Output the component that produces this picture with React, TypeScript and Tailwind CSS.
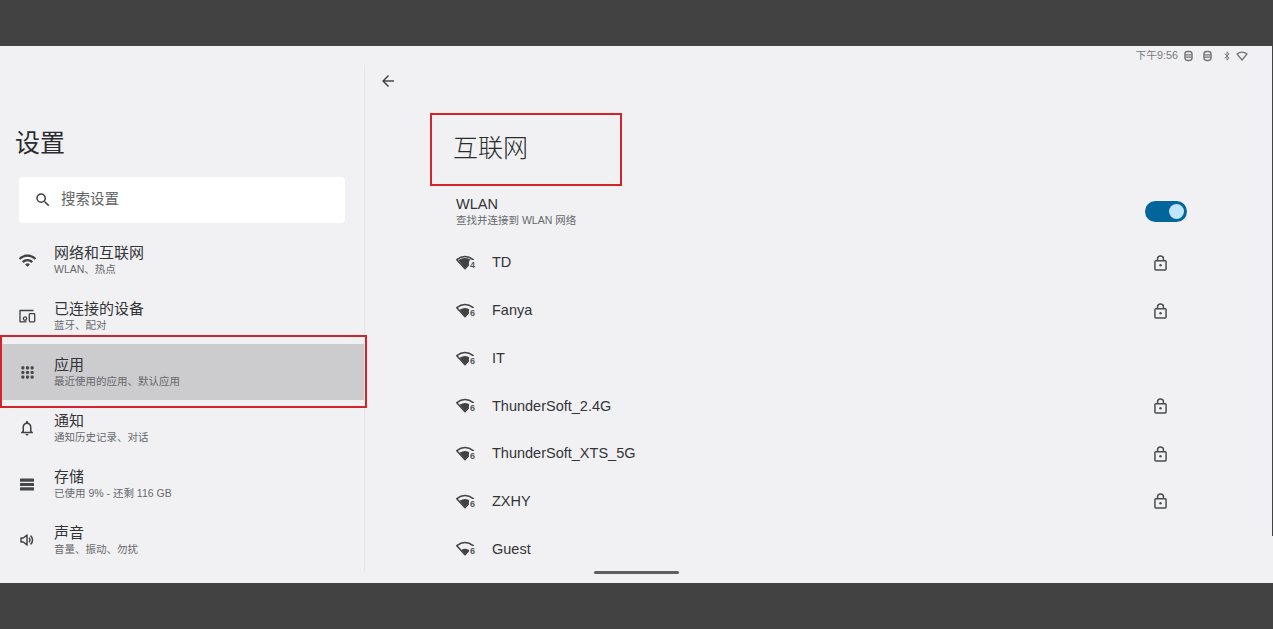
import { Bluetooth } from "lucide-react";
import { MdArrowBack, MdOutlineNotifications, MdSearch, MdWifi } from "react-icons/md";
import type { ReactNode } from "react";

const font = "font-['Liberation_Sans','Noto_Sans_CJK_SC',sans-serif]";

function GridIcon() {
  return (
    <svg viewBox="0 0 14 14" className="h-[13px] w-[13px] fill-[#45474a]">
      {[2, 7, 12].map((y) =>
        [2, 7, 12].map((x) => <rect key={`${x}-${y}`} x={x - 1.7} y={y - 1.7} width="3.4" height="3.4" rx="1.2" />),
      )}
    </svg>
  );
}

function StorageIcon() {
  return (
    <svg viewBox="0 0 14 13" className="h-[13px] w-[14px] fill-[#45474a]">
      <rect x="0" y="0.5" width="14" height="3.2" rx="0.5" />
      <rect x="0" y="4.9" width="14" height="3.2" rx="0.5" />
      <rect x="0" y="9.3" width="14" height="3.2" rx="0.5" />
    </svg>
  );
}

function SoundIcon() {
  return (
    <svg viewBox="0 0 14 14" fill="none" stroke="#3f4144" strokeWidth="1.5" className="h-[14px] w-[14px]">
      <path d="M1 5v4h2.4L7 12V2L3.4 5Z" strokeLinejoin="round" />
      <path d="M9 4.8a3 3 0 0 1 0 4.4" />
      <path d="M10.6 2.6a6 6 0 0 1 0 8.8" />
    </svg>
  );
}

function DevicesIcon() {
  return (
    <svg viewBox="0 0 18 14" fill="none" stroke="#3f4144" strokeWidth="1.3" className="h-[14px] w-[18px]">
      <path d="M2 12.5V1.5h13.5" />
      <path d="M1.5 12.8h7" />
      <circle cx="7" cy="9.6" r="1.7" />
      <rect x="11.3" y="4.6" width="5.4" height="8.2" rx="0.8" />
    </svg>
  );
}

// wifi fan with the little standard number next to it
function WifiBadge({ level, label }: { level: "full" | "mid" | "low"; label: string }) {
  const fill =
    level === "full"
      ? "M2.4 5.8 Q9 1 15.6 5.8 L9 13.8Z"
      : level === "mid"
        ? "M3.6 7.2 Q9 3.6 14.4 7.2 L9 13.8Z"
        : "M5.4 9.4 Q9 7.2 12.6 9.4 L9 13.8Z";
  return (
    <span className="relative -mt-[1px] block h-[16px] w-[20px]">
      <svg viewBox="0 0 18 15" className="absolute left-0 top-0 h-[16px] w-[18px]">
        <path d="M0.8 5.2 Q9 -1.2 17.2 5.2 L9 14.2Z" fill="none" stroke="#3f4144" strokeWidth="1.5" strokeLinejoin="round" />
        <path d={fill} fill="#3f4144" />
      </svg>
      <span className="absolute left-[13px] top-[6px] rounded-[2px] bg-[#f1f1f4] px-px text-[9px] leading-[10px] font-bold text-[#55575a]">
        {label}
      </span>
    </span>
  );
}

function LockIcon() {
  return (
    <svg viewBox="0 0 14 17" fill="none" stroke="#4a4c50" strokeWidth="1.6" className="h-[16px] w-[13px]">
      <rect x="1" y="6" width="12" height="10" rx="1" />
      <path d="M3.8 6V4.2a3.2 3.2 0 0 1 6.4 0V6" />
      <circle cx="7" cy="11" r="1.3" fill="#4a4c50" stroke="none" />
    </svg>
  );
}

function BatteryGlyph() {
  return (
    <svg viewBox="0 0 10 12" fill="none" stroke="#6f7174" strokeWidth="1.4" className="h-[12px] w-[9px]">
      <rect x="1" y="1" width="8" height="10" rx="3" />
      <path d="M1 4.7h8M1 7.3h8" />
    </svg>
  );
}

const menu: { icon: ReactNode; title: string; sub: string; active?: boolean }[] = [
  { icon: <MdWifi size={19} color="#3f4144" />, title: "网络和互联网", sub: "WLAN、热点" },
  { icon: <DevicesIcon />, title: "已连接的设备", sub: "蓝牙、配对" },
  { icon: <GridIcon />, title: "应用", sub: "最近使用的应用、默认应用", active: true },
  { icon: <MdOutlineNotifications size={18} color="#3f4144" />, title: "通知", sub: "通知历史记录、对话" },
  { icon: <StorageIcon />, title: "存储", sub: "已使用 9% - 还剩 116 GB" },
  { icon: <SoundIcon />, title: "声音", sub: "音量、振动、勿扰" },
];

const networks: { name: string; label: string; level: "full" | "mid" | "low"; locked: boolean }[] = [
  { name: "TD", label: "4", level: "full", locked: true },
  { name: "Fanya", label: "6", level: "mid", locked: true },
  { name: "IT", label: "6", level: "mid", locked: false },
  { name: "ThunderSoft_2.4G", label: "6", level: "mid", locked: true },
  { name: "ThunderSoft_XTS_5G", label: "6", level: "mid", locked: true },
  { name: "ZXHY", label: "6", level: "mid", locked: true },
  { name: "Guest", label: "6", level: "low", locked: false },
];

export default function App() {
  return (
    <div className={`${font} flex h-[629px] w-full flex-col overflow-hidden bg-[#424242]`}>
      <div className="h-[46px] shrink-0" />

      <div className="relative flex h-[537px] shrink-0 flex-col bg-[#f1f1f4]">
        {/* status bar */}
        <div className="flex h-[19px] items-center justify-end pr-[25px] text-[10.75px] text-[#77797c]">
          <span>下午9:56</span>
          <span className="ml-[6px]"><BatteryGlyph /></span>
          <span className="ml-[10px]"><BatteryGlyph /></span>
          <span className="ml-[10px]"><Bluetooth size={10} strokeWidth={2.2} color="#6f7174" /></span>
          <svg viewBox="0 0 12 10" fill="none" stroke="#6f7174" strokeWidth="1.2" className="ml-[4px] h-[10px] w-[12px]">
            <path d="M1 3 Q6 -0.6 11 3 L6 9Z" strokeLinejoin="round" />
          </svg>
        </div>

        <div className="flex h-[506px]">
          {/* left pane */}
          <div className="flex w-[365px] shrink-0 flex-col border-r border-[#e6e6e9]">
            <h1 className="mt-[63px] pl-[15px] text-[25px] leading-[30px] font-normal text-[#2b2c2e]">设置</h1>
            <div className="mt-[19px] ml-[19px] flex h-[46px] w-[326px] items-center rounded-[4px] bg-white pl-[15px]">
              <MdSearch size={18} color="#3f4144" />
              <span className="ml-[9px] text-[14.5px] text-[#606265]">搜索设置</span>
            </div>
            <div className="mt-[9px] flex flex-col">
              {menu.map((item) => (
                <div key={item.title} className={`flex h-[56px] items-center ${item.active ? "bg-[#cccbce]" : ""}`}>
                  <span className="flex w-[54px] shrink-0 justify-center">{item.icon}</span>
                  <span className="flex flex-col">
                    <span className="text-[15px] leading-[18px] text-[#333437]">{item.title}</span>
                    <span className="text-[10.5px] leading-[14px] text-[#66686b]">{item.sub}</span>
                  </span>
                </div>
              ))}
            </div>
          </div>

          {/* right pane */}
          <div className="flex min-w-0 flex-1 flex-col">
            <div className="flex h-[32px] shrink-0 items-center pl-[14px]">
              <MdArrowBack size={18} color="#45474a" />
            </div>
            <h2 className="mt-[33px] shrink-0 pl-[88px] text-[25px] leading-[36px] font-light text-[#2b2c2e]">互联网</h2>
            <div className="mt-[19px] flex h-[52px] shrink-0 items-center justify-between pl-[91px] pr-[86px]">
              <span className="flex flex-col">
                <span className="text-[14.5px] leading-[18px] text-[#333437]">WLAN</span>
                <span className="text-[10.5px] leading-[14px] text-[#66686b]">查找并连接到 WLAN 网络</span>
              </span>
              <span className="flex h-[21px] w-[42px] items-center justify-end rounded-full bg-[#02659b] pr-[3px]">
                <span className="h-[15px] w-[15px] rounded-full bg-[#bfe6ff]" />
              </span>
            </div>
            <div className="mt-[2px] flex shrink-0 flex-col">
              {networks.map((n) => (
                <div key={n.name} className="flex h-[47.7px] shrink-0 items-center pl-[91px] pr-[106px]">
                  <WifiBadge level={n.level} label={n.label} />
                  <span className="ml-[16px] flex-1 pt-[1px] text-[14.5px] text-[#333437]">{n.name}</span>
                  {n.locked && <LockIcon />}
                </div>
              ))}
            </div>
          </div>
        </div>

        {/* gesture handle */}
        <div className="absolute left-[594px] top-[525px] h-[3px] w-[85px] rounded-full bg-[#5f5f63]" />
        {/* sliver of the dark frame on the right edge */}
        <div className="absolute right-0 top-0 h-[490px] w-px bg-[#424242]" />
      </div>

      <div className="flex-1" />

      {/* red annotation boxes */}
      <div className="absolute left-[430px] top-[113px] h-[73px] w-[192px] border-2 border-[#d3232c]" />
      <div className="absolute left-0 top-[335px] h-[73px] w-[367px] border-2 border-[#d3232c]" />
    </div>
  );
}
